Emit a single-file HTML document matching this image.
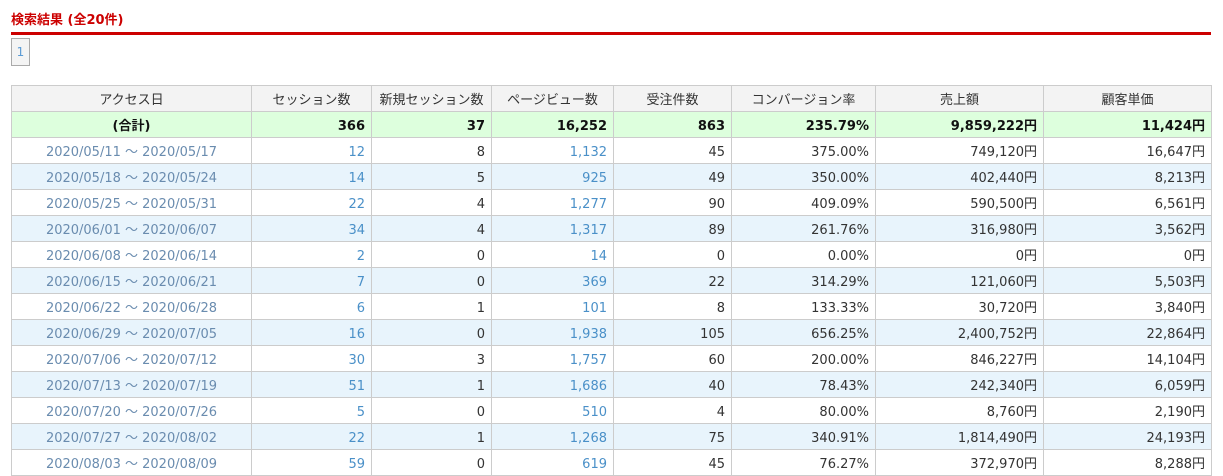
<!DOCTYPE html><html><head><meta charset="utf-8"><style>
body{margin:0;background:#fff;font-family:"DejaVu Sans","Noto Sans CJK JP",sans-serif;font-size:13px;color:#333;overflow:hidden;height:463px}
.t{position:absolute;left:11px;top:9px;color:#c00;font-weight:bold;font-size:13px}
.line{position:absolute;left:11px;top:32px;width:1200px;height:3px;background:#c00}
.pg{position:absolute;left:11px;top:38px;border:1px solid #aaa;background:#f4f4f4;color:#5b9bd5;font-size:12px;text-align:center;line-height:26px;box-sizing:border-box;width:19px;height:28px}
table{position:absolute;left:11px;top:85px;border-collapse:collapse;table-layout:fixed;width:1200px}
td,th{border:1px solid #ccc;height:21px;line-height:21px;padding:4px 6px 0;white-space:nowrap;overflow:hidden;vertical-align:top}
th{background:#f3f3f3;font-weight:normal;color:#333;text-align:center}
td{text-align:right}
td:first-child{text-align:center;color:#6a8caf}
tr.s td{background:#dfd;font-weight:bold;color:#111}
tr.b td{background:#e8f4fc}
.l{color:#4a90c8}
</style></head><body>
<div class="t">検索結果 (全20件)</div><div class="line"></div><div class="pg">1</div>
<table>
<colgroup><col style="width:240px"><col style="width:120px"><col style="width:120px"><col style="width:122px"><col style="width:118px"><col style="width:144px"><col style="width:168px"><col style="width:168px"></colgroup>
<tr><th>アクセス日</th><th>セッション数</th><th>新規セッション数</th><th>ページビュー数</th><th>受注件数</th><th>コンバージョン率</th><th>売上額</th><th>顧客単価</th></tr>
<tr class="s"><td style="text-align:center;color:#111">(合計)</td><td>366</td><td>37</td><td>16,252</td><td>863</td><td>235.79%</td><td>9,859,222円</td><td>11,424円</td></tr>
<tr><td>2020/05/11 ～ 2020/05/17</td><td class="l">12</td><td>8</td><td class="l">1,132</td><td>45</td><td>375.00%</td><td>749,120円</td><td>16,647円</td></tr>
<tr class="b"><td>2020/05/18 ～ 2020/05/24</td><td class="l">14</td><td>5</td><td class="l">925</td><td>49</td><td>350.00%</td><td>402,440円</td><td>8,213円</td></tr>
<tr><td>2020/05/25 ～ 2020/05/31</td><td class="l">22</td><td>4</td><td class="l">1,277</td><td>90</td><td>409.09%</td><td>590,500円</td><td>6,561円</td></tr>
<tr class="b"><td>2020/06/01 ～ 2020/06/07</td><td class="l">34</td><td>4</td><td class="l">1,317</td><td>89</td><td>261.76%</td><td>316,980円</td><td>3,562円</td></tr>
<tr><td>2020/06/08 ～ 2020/06/14</td><td class="l">2</td><td>0</td><td class="l">14</td><td>0</td><td>0.00%</td><td>0円</td><td>0円</td></tr>
<tr class="b"><td>2020/06/15 ～ 2020/06/21</td><td class="l">7</td><td>0</td><td class="l">369</td><td>22</td><td>314.29%</td><td>121,060円</td><td>5,503円</td></tr>
<tr><td>2020/06/22 ～ 2020/06/28</td><td class="l">6</td><td>1</td><td class="l">101</td><td>8</td><td>133.33%</td><td>30,720円</td><td>3,840円</td></tr>
<tr class="b"><td>2020/06/29 ～ 2020/07/05</td><td class="l">16</td><td>0</td><td class="l">1,938</td><td>105</td><td>656.25%</td><td>2,400,752円</td><td>22,864円</td></tr>
<tr><td>2020/07/06 ～ 2020/07/12</td><td class="l">30</td><td>3</td><td class="l">1,757</td><td>60</td><td>200.00%</td><td>846,227円</td><td>14,104円</td></tr>
<tr class="b"><td>2020/07/13 ～ 2020/07/19</td><td class="l">51</td><td>1</td><td class="l">1,686</td><td>40</td><td>78.43%</td><td>242,340円</td><td>6,059円</td></tr>
<tr><td>2020/07/20 ～ 2020/07/26</td><td class="l">5</td><td>0</td><td class="l">510</td><td>4</td><td>80.00%</td><td>8,760円</td><td>2,190円</td></tr>
<tr class="b"><td>2020/07/27 ～ 2020/08/02</td><td class="l">22</td><td>1</td><td class="l">1,268</td><td>75</td><td>340.91%</td><td>1,814,490円</td><td>24,193円</td></tr>
<tr><td>2020/08/03 ～ 2020/08/09</td><td class="l">59</td><td>0</td><td class="l">619</td><td>45</td><td>76.27%</td><td>372,970円</td><td>8,288円</td></tr>
</table>
</body></html>
